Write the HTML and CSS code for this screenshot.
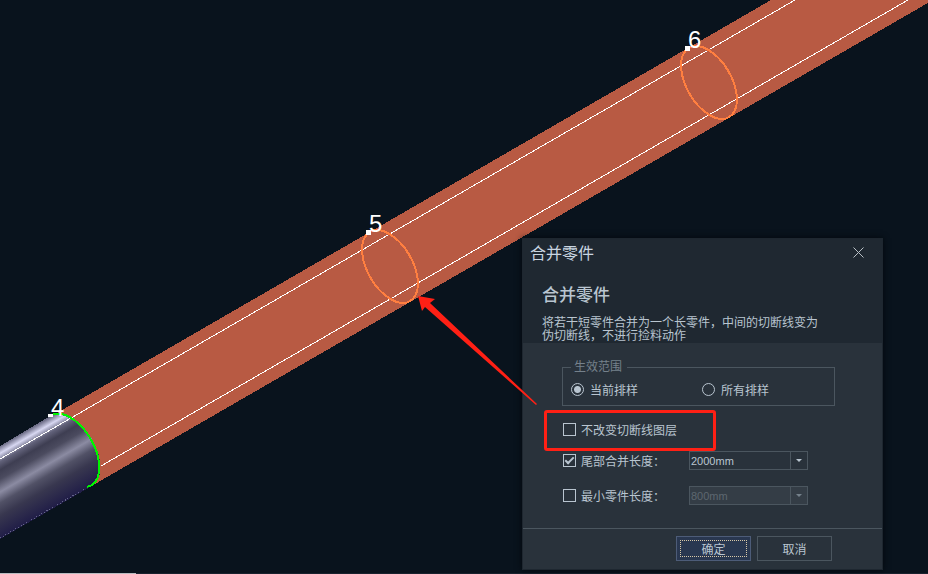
FILE: index.html
```html
<!DOCTYPE html>
<html lang="zh-CN">

<head>
    <meta charset="UTF-8">
    <meta name="viewport" content="width=device-width, initial-scale=1.0">
    <title>合并零件</title>
    <link rel="stylesheet" href="styles.css">
</head>

<body>
    <!-- 管材视图 -->
    <svg class="scene" viewBox="0 0 928 574" preserveAspectRatio="xMinYMin slice">
        <defs>
            <linearGradient id="metal" gradientUnits="userSpaceOnUse" x1="0" y1="446" x2="40" y2="515">
                <stop offset="0" stop-color="#6b6b85" />
                <stop offset="0.08" stop-color="#d8d8f2" />
                <stop offset="0.17" stop-color="#62627a" />
                <stop offset="0.26" stop-color="#3e3e52" />
                <stop offset="0.36" stop-color="#4b4b5f" />
                <stop offset="0.5" stop-color="#8b8ba2" />
                <stop offset="0.62" stop-color="#515166" />
                <stop offset="0.76" stop-color="#38374f" />
                <stop offset="1" stop-color="#211e48" />
            </linearGradient>
        </defs>
        <g shape-rendering="crispEdges">
            <polygon class="tube" points="50,417 771,0 933,0 88,488" />
            <path fill="url(#metal)" d="M0 446L52 415A40 22.6 60 0 1 92 486L0 539Z" />
            <path class="edge" d="M0 538L88 487" />
            <path class="seam" d="M0 459L795 0M101 466L908 0" />
            <ellipse class="cut" cx="390" cy="266.500" rx="40" ry="22.500" transform="rotate(60 390 266.500)" />
            <ellipse class="cut" cx="709" cy="82.500" rx="40" ry="22.500" transform="rotate(60 709 82.500)" />
            <path class="cut active" d="M50 416A40 22.600 60 0 1 92 485L87 487" />
            <path class="dot" d="M48 414h5v3h-5zM366 230h5v5h-5zM685 46h5v5h-5z" />
        </g>
        <g class="number">
            <text x="51" y="416">4</text>
            <text x="369" y="232">5</text>
            <text x="688" y="48">6</text>
        </g>
    </svg>
    <div class="status"></div>

    <!-- 合并零件对话框 -->
    <form class="dialog">
        <div class="title-bar">
            <span>合并零件</span>
            <button type="button" class="close" aria-label="关闭">
                <svg width="11" height="11" viewBox="0 0 11 11">
                    <path d="M0.500 0.500L10.500 10.500M10.500 0.500L0.500 10.500" />
                </svg>
            </button>
        </div>
        <div class="intro">
            <h2>合并零件</h2>
            <p>将若干短零件合并为一个长零件，中间的切断线变为伪切断线，不进行捡料动作</p>
        </div>
        <div class="content">
            <fieldset>
                <legend>生效范围</legend>
                <label><input type="radio" name="range" checked>当前排样</label>
                <label><input type="radio" name="range">所有排样</label>
            </fieldset>
            <div class="row keep">
                <label><input type="checkbox">不改变切断线图层</label>
            </div>
            <div class="row">
                <label><input type="checkbox" checked>尾部合并长度：</label>
                <div class="combo">
                    <select aria-label="尾部合并长度">
                        <option>2000mm</option>
                    </select>
                </div>
            </div>
            <div class="row last">
                <label><input type="checkbox">最小零件长度：</label>
                <div class="combo">
                    <select aria-label="最小零件长度" disabled>
                        <option>800mm</option>
                    </select>
                </div>
            </div>
        </div>
        <div class="footer">
            <button type="submit" class="btn ok">确定</button>
            <button type="button" class="btn">取消</button>
        </div>
    </form>

    <!-- 标注箭头 -->
    <svg class="scene arrow" viewBox="0 0 928 574" preserveAspectRatio="xMinYMin slice">
        <polygon points="418,296 435,299 430,303 537,404 536,405 425,307 422,311" />
    </svg>
</body>

</html>
```
FILE: styles.css
```css
*,
*::before,
*::after {
    box-sizing: border-box;
}

body {
    margin: 0;
    min-height: 100vh;
    position: relative;
    overflow: hidden;
    background-color: #09131d;
    color: #b9c5d0;
    font-family: "Liberation Sans", "Noto Sans CJK SC", sans-serif;
    font-size: 12px;
}

/* 视图 */
.scene {
    position: absolute;
    top: 0;
    left: 0;
    width: 100%;
    height: 100%;
}

.tube {
    fill: #b85a43;
}

.seam {
    fill: none;
    stroke: #fff;
}

.edge {
    stroke: #66668a;
    stroke-dasharray: 1 2;
}

.cut {
    fill: none;
    stroke: #ff7f40;
    stroke-width: 2;
}

.active {
    stroke: #00f500;
}

.dot {
    fill: #fff;
}

.number {
    fill: #fff;
    font-size: 24px;
}

.arrow {
    pointer-events: none;
    fill: #ff2015;
}

.status {
    position: absolute;
    left: 0;
    right: 0;
    bottom: 0;
    height: 1px;
    background: linear-gradient(to right, #b8bcc0 136px, #18222e 136px);
}

/* 对话框 */
.dialog {
    position: absolute;
    right: 45px;
    bottom: 4px;
    width: 361px;
    border: 1px solid #1e2730;
    background-color: #29323b;
    box-shadow: 0 0 6px #03080d;
}

.title-bar {
    display: flex;
    justify-content: space-between;
    align-items: center;
    height: 28px;
    padding: 0 18px 2px 7px;
    background-color: #1f2831;
    color: #c9d5e0;
    font-size: 16px;
}

.close {
    display: flex;
    padding: 0;
    border: 0;
    background: none;
}

.close svg {
    fill: none;
    stroke: #b9c0c6;
}

.intro {
    padding: 17px 60px 0 19px;
    background-color: #1f2831;
}

.intro h2 {
    margin: 0 0 9px;
    font-size: 17px;
    font-weight: 500;
    line-height: 24px;
}

.intro p {
    margin: 0;
    line-height: 13px;
}

.content {
    padding: 17px 47px 23px 39px;
}

fieldset {
    display: flex;
    margin: 0 0 14px;
    padding: 6px 0 6px 8px;
    border: 1px solid #4b565f;
}

legend {
    padding: 0 5px 0 3px;
    color: #75818b;
    line-height: 14px;
}

label {
    display: flex;
    align-items: center;
    height: 19px;
}

fieldset label {
    width: 131px;
}

input {
    appearance: none;
    flex: none;
    width: 13px;
    height: 13px;
    margin: 0 5px 0 0;
    border: 1px solid #b9c5d0;
}

input[type="radio"] {
    margin-right: 6px;
    border-radius: 50%;
}

input[type="radio"]:checked {
    background: radial-gradient(circle, #b9c5d0 3px, transparent 4px);
}

input[type="checkbox"]:checked::before {
    content: "";
    display: block;
    width: 9px;
    height: 5px;
    margin: 2px 1px;
    border: solid #b9c5d0;
    border-width: 0 0 2px 2px;
    transform: rotate(-45deg);
}

.row {
    display: flex;
    align-items: center;
    margin-bottom: 16px;
    padding-left: 1px;
}

.row label {
    width: 126px;
}

.row.keep {
    position: relative;
    margin-bottom: 12px;
}

.row.last {
    margin-bottom: 0;
}

/* 红色标注框 */
.keep::after {
    content: "";
    position: absolute;
    top: -10px;
    left: -18px;
    width: 172px;
    height: 41px;
    border: 3px solid #ff2015;
    border-radius: 3px;
    pointer-events: none;
}

.combo {
    position: relative;
    width: 119px;
    height: 19px;
}

.combo::before {
    content: "";
    position: absolute;
    top: 0;
    right: 17px;
    height: 100%;
    border-left: 1px solid #4b565f;
}

.combo::after {
    content: "";
    position: absolute;
    top: 8px;
    right: 6px;
    border: 3px solid transparent;
    border-top-color: #b9c5d0;
    border-bottom: 0;
    pointer-events: none;
}

.last .combo::after {
    border-top-color: #75818b;
}

select {
    appearance: none;
    display: block;
    width: 100%;
    height: 100%;
    padding: 0 1px;
    border: 1px solid #4b565f;
    border-radius: 0;
    background-color: #29323b;
    color: #b9c5d0;
    font-family: inherit;
    font-size: 11px;
}

select:disabled {
    background-color: #343d46;
    color: #5d6770;
    opacity: 1;
}

.footer {
    display: flex;
    justify-content: flex-end;
    gap: 6px;
    padding: 7px 50px 8px;
    border-top: 1px solid #4b565f;
}

.btn {
    width: 75px;
    height: 25px;
    padding: 0;
    border: 1px solid #4b565f;
    background-color: #29323b;
    color: #b9c5d0;
    font-family: inherit;
    font-size: 12px;
}

.ok {
    border-color: #4d5c78;
    background-color: #293750;
    outline: 1px dotted #d8c8a8;
    outline-offset: -5px;
}
```
